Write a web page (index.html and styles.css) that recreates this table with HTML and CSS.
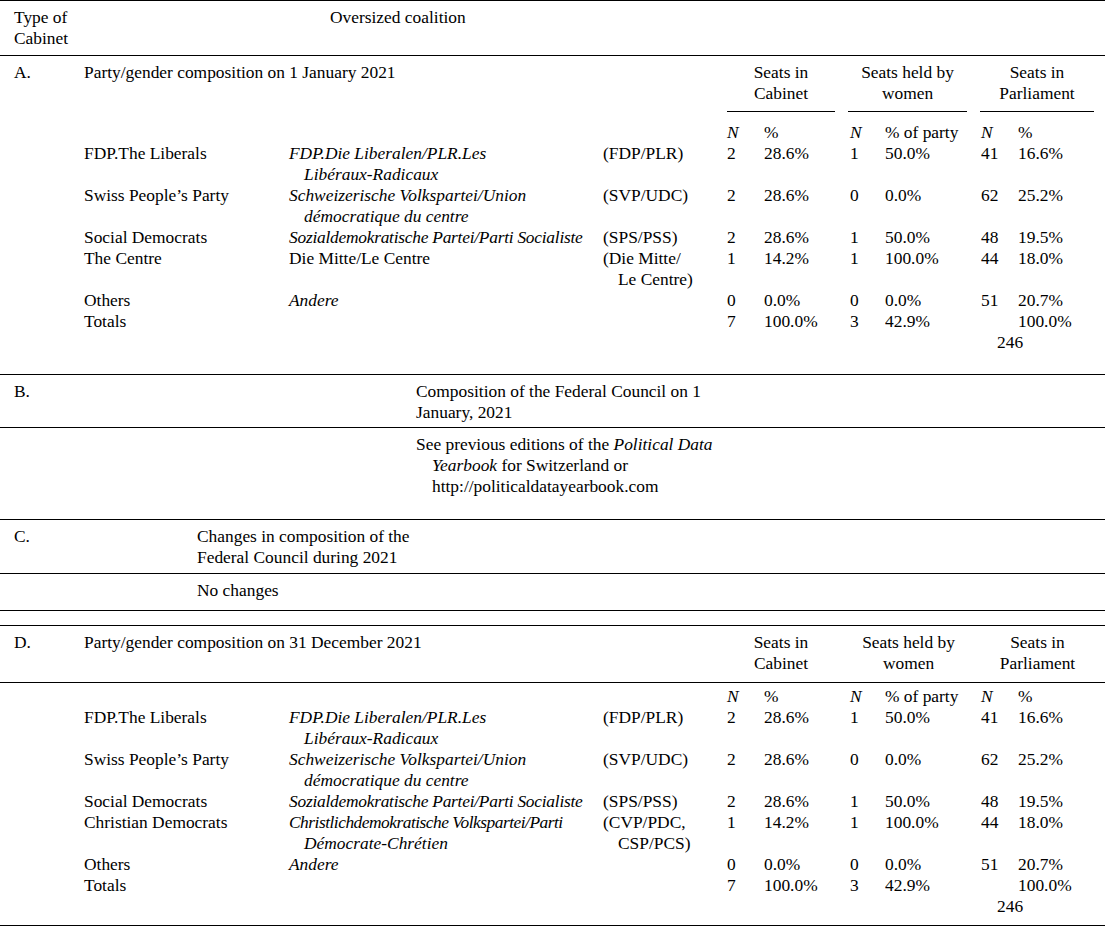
FILE: index.html
```html
<!DOCTYPE html>
<html lang="en">
<head>
<meta charset="utf-8">
<title>Switzerland – Cabinet composition</title>
<link rel="stylesheet" href="styles.css">
</head>
<body>
<div class="page">

  <table class="tbl hdr">
    <colgroup><col class="h1"><col class="h2"><col></colgroup>
    <tr>
      <td class="first">Type of<br>Cabinet</td>
      <td></td>
      <td>Oversized coalition</td>
    </tr>
  </table>

  <table class="tbl main">
    <colgroup>
      <col class="c1"><col class="c2"><col class="c3"><col class="c4"><col class="c5">
      <col class="c6"><col class="c7"><col class="c8"><col class="c9"><col class="c10">
    </colgroup>
    <tr class="top">
      <td class="first">A.</td>
      <td colspan="3">Party/gender composition on 1 January 2021</td>
      <td colspan="2" class="grp"><div class="ul">Seats in<br>Cabinet</div></td>
      <td colspan="2" class="grp g2"><div class="ul">Seats held by<br>women</div></td>
      <td colspan="2" class="grp g3"><div class="ul">Seats in<br>Parliament</div></td>
    </tr>
    <tr class="sub">
      <td></td><td></td><td></td><td></td>
      <td><i>N</i></td><td>%</td><td><i>N</i></td><td>% of party</td><td><i>N</i></td><td>%</td>
    </tr>
    <tr>
      <td></td><td>FDP.The Liberals</td>
      <td class="hang"><i>FDP.Die Liberalen/PLR.Les<br>Libéraux-Radicaux</i></td>
      <td class="hang">(FDP/PLR)</td>
      <td>2</td><td>28.6%</td><td>1</td><td>50.0%</td><td>41</td><td>16.6%</td>
    </tr>
    <tr>
      <td></td><td>Swiss People’s Party</td>
      <td class="hang"><i>Schweizerische Volkspartei/Union<br>démocratique du centre</i></td>
      <td class="hang">(SVP/UDC)</td>
      <td>2</td><td>28.6%</td><td>0</td><td>0.0%</td><td>62</td><td>25.2%</td>
    </tr>
    <tr>
      <td></td><td>Social Democrats</td>
      <td class="hang"><i class="tight">Sozialdemokratische Partei/Parti Socialiste</i></td>
      <td class="hang">(SPS/PSS)</td>
      <td>2</td><td>28.6%</td><td>1</td><td>50.0%</td><td>48</td><td>19.5%</td>
    </tr>
    <tr>
      <td></td><td>The Centre</td>
      <td class="hang">Die Mitte/Le Centre</td>
      <td class="hang">(Die Mitte/<br>Le Centre)</td>
      <td>1</td><td>14.2%</td><td>1</td><td>100.0%</td><td>44</td><td>18.0%</td>
    </tr>
    <tr>
      <td></td><td>Others</td>
      <td class="hang"><i>Andere</i></td>
      <td></td>
      <td>0</td><td>0.0%</td><td>0</td><td>0.0%</td><td>51</td><td>20.7%</td>
    </tr>
    <tr class="last">
      <td></td><td>Totals</td><td></td><td></td>
      <td>7</td><td>100.0%</td><td>3</td><td>42.9%</td>
      <td class="tot">&nbsp;<br>246</td><td>100.0%</td>
    </tr>
  </table>

  <table class="tbl secb">
    <colgroup><col class="b1"><col></colgroup>
    <tr class="rowb1">
      <td class="first">B.</td>
      <td>Composition of the Federal Council on 1<br>January, 2021</td>
    </tr>
    <tr class="rowb2">
      <td></td>
      <td class="hang">See previous editions of the <i>Political Data<br>Yearbook</i> for Switzerland or<br>http://politicaldatayearbook.com</td>
    </tr>
  </table>

  <table class="tbl secc">
    <colgroup><col class="cc1"><col></colgroup>
    <tr class="rowc1">
      <td class="first">C.</td>
      <td>Changes in composition of the<br>Federal Council during 2021</td>
    </tr>
    <tr class="rowc2">
      <td></td>
      <td>No changes</td>
    </tr>
    <tr class="gap"><td></td><td></td></tr>
  </table>

  <table class="tbl main maind">
    <colgroup>
      <col class="c1"><col class="c2"><col class="c3"><col class="c4"><col class="c5">
      <col class="c6"><col class="c7"><col class="c8"><col class="c9"><col class="c10">
    </colgroup>
    <tr class="top topd">
      <td class="first">D.</td>
      <td colspan="3">Party/gender composition on 31 December 2021</td>
      <td colspan="2" class="grp"><div class="noul">Seats in<br>Cabinet</div></td>
      <td colspan="2" class="grp g2"><div class="noul">Seats held by<br>women</div></td>
      <td colspan="2" class="grp g3"><div class="noul">Seats in<br>Parliament</div></td>
    </tr>
    <tr class="sub subd">
      <td></td><td></td><td></td><td></td>
      <td><i>N</i></td><td>%</td><td><i>N</i></td><td>% of party</td><td><i>N</i></td><td>%</td>
    </tr>
    <tr>
      <td></td><td>FDP.The Liberals</td>
      <td class="hang"><i>FDP.Die Liberalen/PLR.Les<br>Libéraux-Radicaux</i></td>
      <td class="hang">(FDP/PLR)</td>
      <td>2</td><td>28.6%</td><td>1</td><td>50.0%</td><td>41</td><td>16.6%</td>
    </tr>
    <tr>
      <td></td><td>Swiss People’s Party</td>
      <td class="hang"><i>Schweizerische Volkspartei/Union<br>démocratique du centre</i></td>
      <td class="hang">(SVP/UDC)</td>
      <td>2</td><td>28.6%</td><td>0</td><td>0.0%</td><td>62</td><td>25.2%</td>
    </tr>
    <tr>
      <td></td><td>Social Democrats</td>
      <td class="hang"><i class="tight">Sozialdemokratische Partei/Parti Socialiste</i></td>
      <td class="hang">(SPS/PSS)</td>
      <td>2</td><td>28.6%</td><td>1</td><td>50.0%</td><td>48</td><td>19.5%</td>
    </tr>
    <tr>
      <td></td><td>Christian Democrats</td>
      <td class="hang"><i class="tighter">Christlichdemokratische Volkspartei/Parti</i><br><i>Démocrate-Chrétien</i></td>
      <td class="hang">(CVP/PDC,<br>CSP/PCS)</td>
      <td>1</td><td>14.2%</td><td>1</td><td>100.0%</td><td>44</td><td>18.0%</td>
    </tr>
    <tr>
      <td></td><td>Others</td>
      <td class="hang"><i>Andere</i></td>
      <td></td>
      <td>0</td><td>0.0%</td><td>0</td><td>0.0%</td><td>51</td><td>20.7%</td>
    </tr>
    <tr class="last lastd">
      <td></td><td>Totals</td><td></td><td></td>
      <td>7</td><td>100.0%</td><td>3</td><td>42.9%</td>
      <td class="tot">&nbsp;<br>246</td><td>100.0%</td>
    </tr>
  </table>

</div>
</body>
</html>
```

FILE: styles.css
```css
html, body {
  margin: 0;
  padding: 0;
  background: #fff;
}

.page {
  width: 1105px;
  font-family: "Liberation Serif", "Times New Roman", serif;
  font-size: 17.4px;
  line-height: 21px;
  color: #000;
}

.tbl {
  width: 1105px;
  table-layout: fixed;
  border-collapse: collapse;
  border-top: 1px solid #000;
}

.tbl td {
  padding: 0;
  vertical-align: top;
  text-align: left;
  white-space: nowrap;
}

.tbl td.first {
  padding-left: 14px;
}

.hang {
  padding-left: 15px !important;
  text-indent: -15px;
}

.tight { letter-spacing: -0.25px; }
.tighter { letter-spacing: -0.5px; }

/* header */
.hdr col.h1 { width: 84px; }
.hdr col.h2 { width: 246px; }
.hdr td { padding-top: 6px; padding-bottom: 6px; }

/* main tables */
.main col.c1 { width: 84px; }
.main col.c2 { width: 205px; }
.main col.c3 { width: 314px; }
.main col.c4 { width: 124px; }
.main col.c5 { width: 37px; }
.main col.c6 { width: 86px; }
.main col.c7 { width: 35px; }
.main col.c8 { width: 96px; }
.main col.c9 { width: 37px; }
.main col.c10 { width: 87px; }

.main tr.top td { padding-top: 6px; }
.main td.grp { text-align: center; padding-right: 15px; }
.main td.g2 { padding-left: 0; padding-right: 14px; }
.main td.g2 .ul { margin-left: -2px; }
.main td.g3 { padding-right: 11px; }
.main td.g3 .ul { margin-left: -1px; }

.ul {
  border-bottom: 1px solid #000;
  padding-bottom: 7px;
}

.main tr.sub td { padding-top: 10px; }
.main tr.last td { padding-bottom: 21px; }
.main td.tot { padding-left: 16px; }

/* D variant */
.main tr.topd td { padding-bottom: 8px; border-bottom: 1px solid #000; }
.main tr.subd td { padding-top: 3px; }
.main tr.lastd td { padding-bottom: 8px; }
.maind { border-bottom: 1px solid #000; }

/* section B */
.secb col.b1 { width: 416px; }
.secb .rowb1 td { padding-top: 6px; padding-bottom: 4px; border-bottom: 1px solid #000; }
.secb .rowb2 td { padding-top: 6px; padding-bottom: 22px; }
.secb td.hang { padding-left: 16px !important; text-indent: -16px; }

/* section C */
.secc col.cc1 { width: 197px; }
.secc .rowc1 td { padding-top: 6px; padding-bottom: 5px; border-bottom: 1px solid #000; }
.secc .rowc2 td { padding-top: 6px; padding-bottom: 9px; border-bottom: 1px solid #000; }
.secc .gap td { height: 14px; }
```
